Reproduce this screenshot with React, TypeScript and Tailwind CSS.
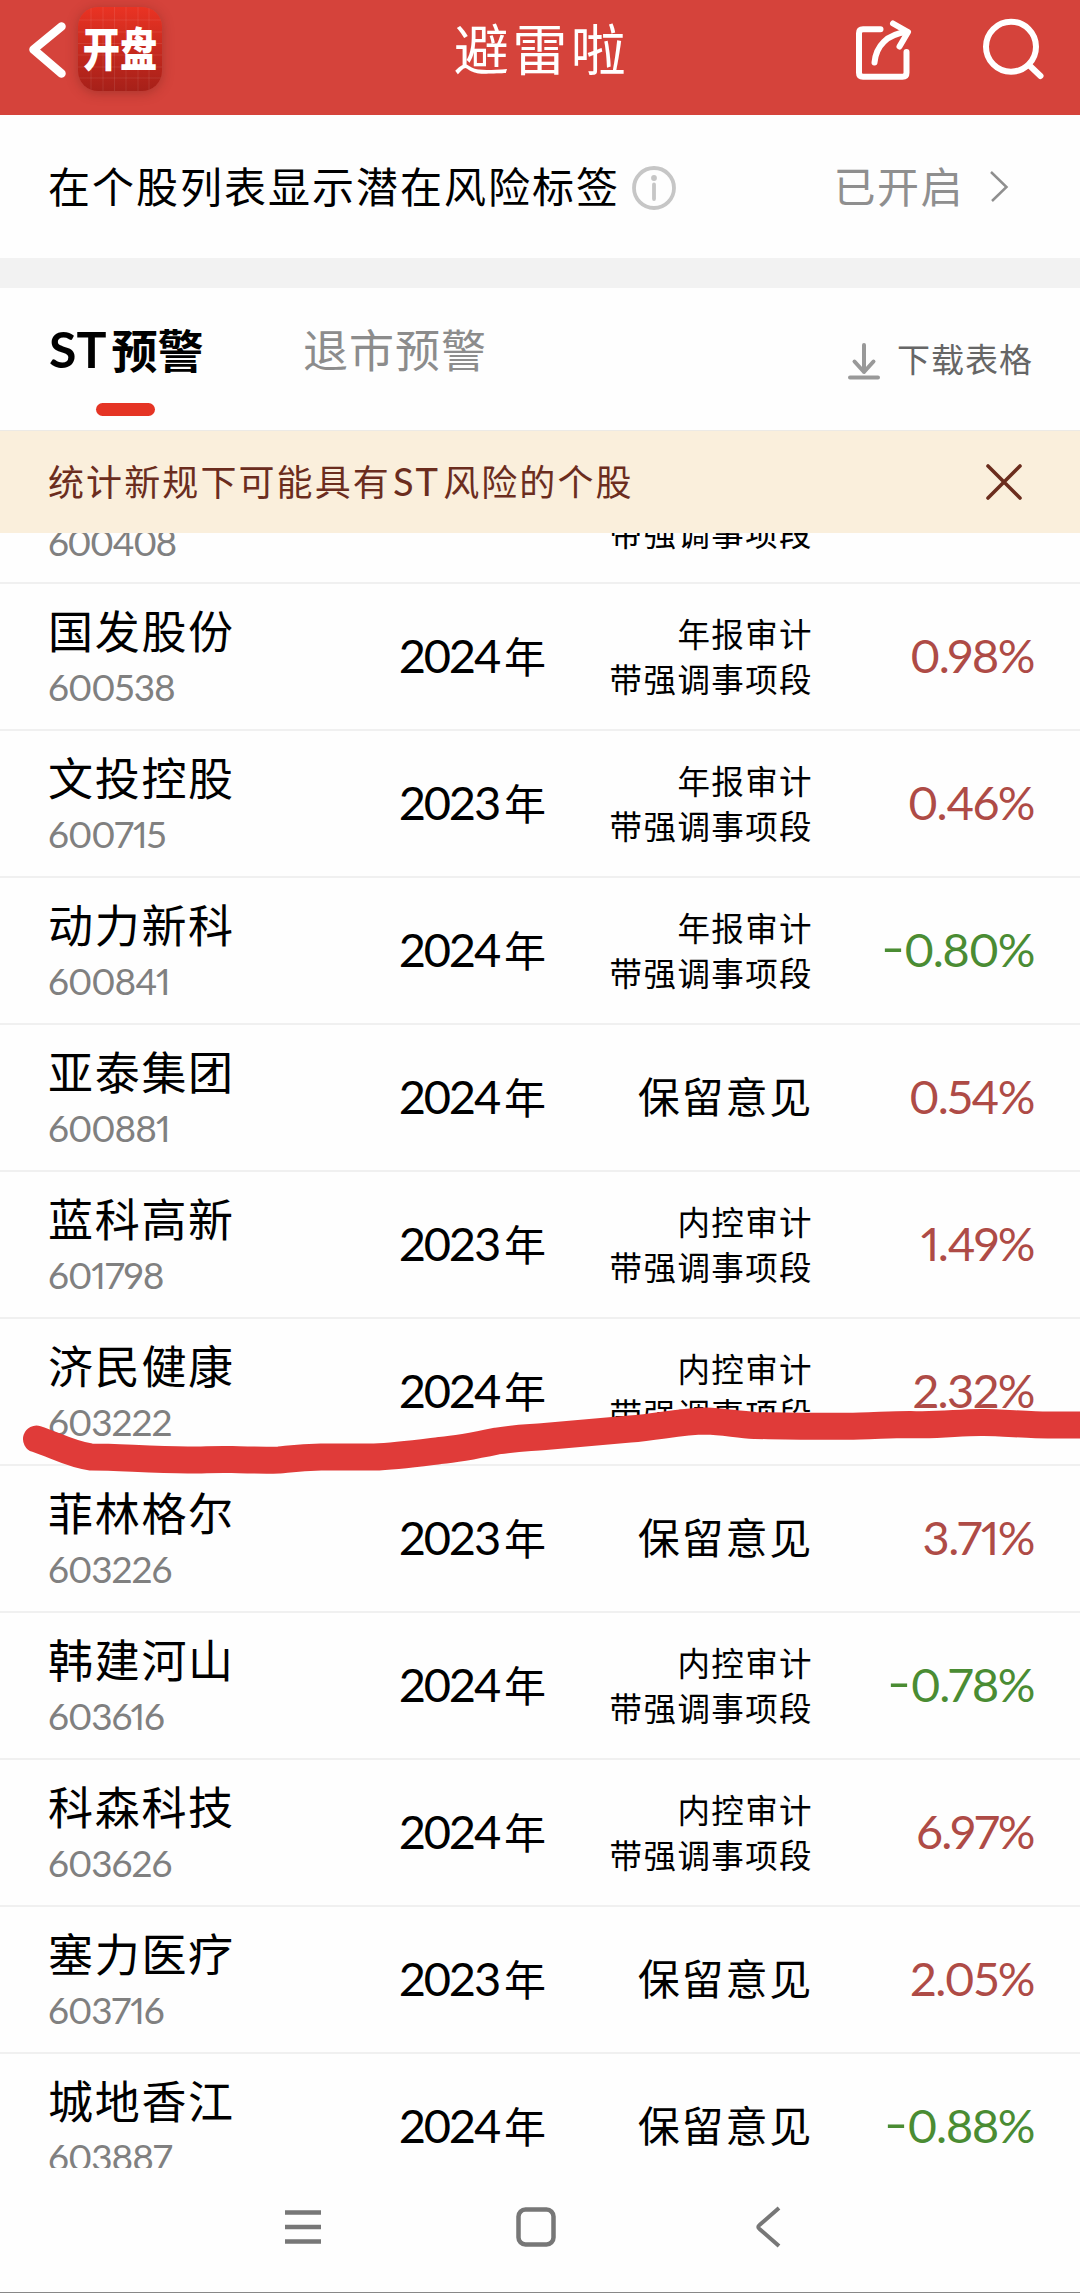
import React from "react";

interface Stock {
  name: string;
  code: string;
  year: string;
  detail: string[];
  change: string;
}

const ANNUAL = ["年报审计", "带强调事项段"];
const INTERNAL = ["内控审计", "带强调事项段"];
const QUALIFIED = ["保留意见"];

const STOCKS: Stock[] = [
  { name: "国发股份", code: "600538", year: "2024", detail: ANNUAL, change: "0.98%" },
  { name: "文投控股", code: "600715", year: "2023", detail: ANNUAL, change: "0.46%" },
  { name: "动力新科", code: "600841", year: "2024", detail: ANNUAL, change: "-0.80%" },
  { name: "亚泰集团", code: "600881", year: "2024", detail: QUALIFIED, change: "0.54%" },
  { name: "蓝科高新", code: "601798", year: "2023", detail: INTERNAL, change: "1.49%" },
  { name: "济民健康", code: "603222", year: "2024", detail: INTERNAL, change: "2.32%" },
  { name: "菲林格尔", code: "603226", year: "2023", detail: QUALIFIED, change: "3.71%" },
  { name: "韩建河山", code: "603616", year: "2024", detail: INTERNAL, change: "-0.78%" },
  { name: "科森科技", code: "603626", year: "2024", detail: INTERNAL, change: "6.97%" },
  { name: "塞力医疗", code: "603716", year: "2023", detail: QUALIFIED, change: "2.05%" },
  { name: "城地香江", code: "603887", year: "2024", detail: QUALIFIED, change: "-0.88%" },
];

const AppBadge: React.FC = () => (
  <div className="relative ml-[12px] flex h-[84px] w-[84px] items-center justify-center overflow-hidden rounded-[20px] bg-gradient-to-b from-[#ea3323] to-[#a62019] shadow-[0_2px_12px_rgba(90,30,20,0.35)]">
    <svg className="absolute inset-0" width="84" height="84" viewBox="0 0 84 84" stroke="#fff" strokeOpacity="0.09">
      <path d="M13 0V84M25 0V84M36.500 0V84M48 0V84M60 0V84M71 0V84M0 13H84M0 25H84M0 36.500H84M0 48H84M0 60H84M0 71H84" />
    </svg>
    <span className="relative scale-x-[0.81] text-[46px] leading-[60px] font-black whitespace-nowrap text-white">
      开盘
    </span>
  </div>
);

const Header: React.FC = () => (
  <header className="grid h-[115px] grid-cols-[1fr_auto_1fr] bg-[#d5433b] text-white">
    <div className="flex items-start pt-[7px] pl-[28px]">
      <svg className="mt-[13px]" width="38" height="60" viewBox="0 0 38 60" fill="none" stroke="#fff" strokeWidth="8.500" strokeLinecap="round" strokeLinejoin="round">
        <path d="M33.500 6.500L5.500 29.500L33.500 53.500" />
      </svg>
      <AppBadge />
    </div>
    <h1 className="pt-[14px] pl-[3px] text-[55px] leading-[70px] tracking-[3.500px]">避雷啦</h1>
    <div className="flex items-start justify-end gap-[66px] pt-[16px] pr-[33px]">
      {/* Share */}
      <svg width="60" height="66" viewBox="0 0 60 66" fill="none" stroke="#fff" strokeWidth="6" strokeLinecap="round" strokeLinejoin="round">
        <path d="M26.500 13.300H9Q5 13.300 5 17.300V56.700Q5 60.700 9 60.700H48.500Q52.500 60.700 52.500 56.700V36" />
        <path d="M20.500 46.500C22 30 33 18 53 16" />
        <path d="M39 7.500L54 16L45.500 30.500" />
      </svg>
      {/* Search */}
      <svg width="67" height="66" viewBox="0 0 67 66" fill="none" stroke="#fff" strokeWidth="6" strokeLinecap="round">
        <circle cx="31" cy="30.700" r="25" />
        <path d="M49 49L60.500 60" />
      </svg>
    </div>
  </header>
);

const SettingRow: React.FC = () => (
  <div className="flex h-[143px] items-center pr-[71px] pl-[48px]">
    <span className="text-[42px] leading-[60px] tracking-[2px]">在个股列表显示潜在风险标签</span>
    <svg className="mt-[2px] ml-[11px]" width="46" height="46" viewBox="0 0 46 46" fill="none" stroke="#c6c6c6" strokeWidth="3.800">
      <circle cx="23" cy="23" r="20" />
      <circle cx="23" cy="13" r="2.900" fill="#c6c6c6" stroke="none" />
      <path d="M23 19.500V34" strokeLinecap="round" />
    </svg>
    <span className="mt-px ml-auto text-[42px] leading-[60px] tracking-[1.500px] text-[#8f8f8f]">已开启</span>
    <svg className="ml-[25px]" width="20" height="34" viewBox="0 0 20 34" fill="none" stroke="#8f8f8f" strokeWidth="2.500">
      <path d="M2 2L17.500 17L3 31" />
    </svg>
  </div>
);

const Tabs: React.FC = () => (
  <nav className="flex h-[143px] items-start border-b border-[#eceae6] px-[49px]">
    <button className="flex w-[154px] flex-col items-start">
      <span className="h-[97px] pt-[26px] text-[46px] leading-[70px] font-bold whitespace-nowrap">
        <span className="mr-[5px] text-[50px]">ST</span>预警
      </span>
      <span className="mt-[18px] ml-[47px] h-[13px] w-[59px] rounded-full bg-[#e53424]" />
    </button>
    <button className="ml-[100px] pt-[28px] text-[45px] leading-[70px] tracking-[1px] text-[#8c8c8c]">退市预警</button>
    <div className="-mr-[2px] ml-auto flex items-center pt-[41px]">
      <svg className="mt-[3px]" width="36" height="40" viewBox="0 0 36 40" fill="none" stroke="#999" strokeWidth="4" strokeLinecap="round" strokeLinejoin="round">
        <path d="M18 4V31M8.500 20.500L18 31L27.500 20.500M4 36.500H32" />
      </svg>
      <span className="ml-[15px] text-[33px] leading-[60px] tracking-[1px] text-[#666]">下载表格</span>
    </div>
  </nav>
);

const Notice: React.FC = () => (
  <div className="flex h-[102px] items-center justify-between bg-[#faefdc] pr-[56px] pl-[48px] text-[#6b2d1e]">
    <p className="pb-px text-[36px] leading-[60px] tracking-[2.100px]">
      统计新规下可能具有<span className="mr-[3px] ml-[2px] text-[38px]">ST</span>风险的个股
    </p>
    <svg width="40" height="40" viewBox="0 0 40 40" fill="none" stroke="#6b2d1e" strokeWidth="3.600" strokeLinecap="round">
      <path d="M4 4L36 36M36 4L4 36" />
    </svg>
  </div>
);

const StockRow: React.FC<{ stock: Stock }> = ({ stock }) => {
  const isDown = stock.change.startsWith("-");
  return (
    <li className="flex h-[147px] shrink-0 items-center border-b-2 border-[#f0f0f0] pr-[46px] pl-[48px]">
      <div className="w-[300px] pt-[5px]">
        <div className="text-[45px] leading-[56px] tracking-[1.700px]">{stock.name}</div>
        <div className="text-[37px] leading-[54px] tracking-[-1px] text-[#808080] proportional-nums">{stock.code}</div>
      </div>
      <div className="flex w-[198px] items-baseline justify-end text-[42px]">
        <span className="text-[47px] leading-[60px] tracking-[-2.200px]">{stock.year}</span>
        <span className="ml-[5px]">年</span>
      </div>
      {stock.detail.length > 1 ? (
        <div className="ml-auto text-right text-[32.500px] leading-[45px] tracking-[1.400px]">
          {stock.detail.map((line) => (
            <div key={line}>{line}</div>
          ))}
        </div>
      ) : (
        <div className="ml-auto pb-[2px] text-[42px] leading-[60px] tracking-[1.800px]">{stock.detail[0]}</div>
      )}
      <div
        className={`w-[221px] pb-[3px] text-right text-[47px] leading-[60px] tracking-[-1.500px] proportional-nums ${
          isDown ? "text-[#4a8c33]" : "text-[#ae4b46]"
        }`}
      >
        {isDown && <span className="mr-[4px] inline-block -translate-y-[3px] scale-x-[1.400]">-</span>}
        {stock.change.replace("-", "")}
      </div>
    </li>
  );
};

const NavBar: React.FC = () => (
  <footer className="flex h-[125px] items-start gap-[187px] border-b border-[#888] pt-[36px] pl-[280px]">
    <svg width="46" height="46" viewBox="0 0 46 46" fill="none" stroke="#777" strokeWidth="4.500">
      <path d="M5 8.500H41M5 23H41M5 37.500H41" />
    </svg>
    <svg width="46" height="46" viewBox="0 0 46 46" fill="none" stroke="#777" strokeWidth="4.500">
      <rect x="5.500" y="5.500" width="35" height="35" rx="7" />
    </svg>
    <svg width="46" height="46" viewBox="0 0 46 46" fill="none" stroke="#777" strokeWidth="4" strokeLinejoin="round">
      <path d="M33 4L13.500 21Q11 23 13.500 25L33 42" />
    </svg>
  </footer>
);

const App: React.FC = () => {
  return (
    <div className="relative flex h-[2293px] w-[1080px] flex-col overflow-hidden bg-[#fefefe] font-[Lato,'Noto_Sans_CJK_SC',sans-serif] text-black">
      <Header />
      <SettingRow />
      <div className="h-[30px] bg-[#f2f2f2]" />
      <Tabs />
      <Notice />

      <ul className="flex h-[1635px] flex-col overflow-hidden">
        {/* Tail of the row that is scrolled under the notice */}
        <li className="flex h-[51px] shrink-0 items-end justify-between overflow-hidden border-b-2 border-[#f0f0f0] pr-[267px] pl-[48px]">
          <span className="pb-[13px] text-[37px] leading-[54px] tracking-[-1.700px] text-[#808080] proportional-nums">
            600408
          </span>
          <span className="pb-[26px] text-[32.500px] leading-[45px] tracking-[1.400px]">带强调事项段</span>
        </li>
        {STOCKS.map((stock) => (
          <StockRow key={stock.code} stock={stock} />
        ))}
      </ul>
      <NavBar />

      {/* Marker stroke drawn over the list */}
      <svg className="pointer-events-none absolute top-[1390px] left-0" width="1080" height="110" viewBox="0 1390 1080 110" fill="none">
        <path
          d="M36.500 1439C55 1445 72 1455 91 1457C120 1457 150 1460 188 1460C205 1460 215 1459 232 1459.500C250 1460 262 1460.500 279 1460C290 1459 300 1457.500 321 1457H374C395 1456.500 420 1453 440 1450.500C458 1449 478 1445 497 1441C520 1437.500 530 1438 545 1436.500L630 1429C660 1426.500 680 1421.500 706 1421C722 1421.500 735 1424 755 1425.500C785 1426 825 1427 860 1426C880 1425.500 890 1424.500 910 1424.500C940 1426 960 1422 984 1422.500C1000 1422.500 1030 1425 1048 1425H1100"
          stroke="#e03b39"
          strokeWidth="27"
          strokeLinecap="round"
          strokeLinejoin="round"
        />
      </svg>
    </div>
  );
};

export default App;
